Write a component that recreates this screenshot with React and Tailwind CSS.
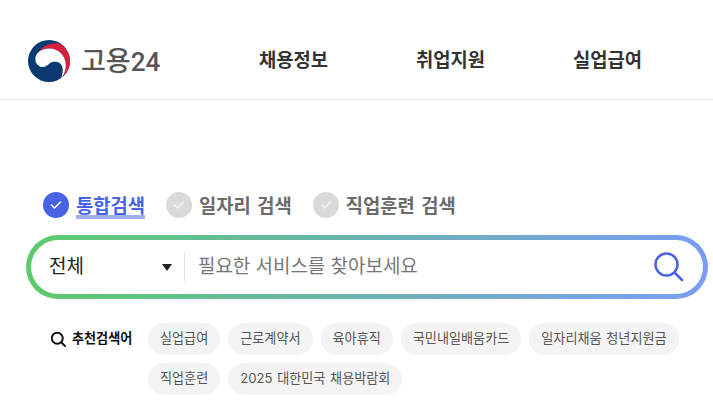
const FONT = "font-['Inter','Noto_Sans_CJK_KR',sans-serif]";

const NAV = ["채용정보", "취업지원", "실업급여"];
const ROW_1 = ["실업급여", "근로계약서", "육아휴직", "국민내일배움카드", "일자리채움 청년지원금"];
const ROW_2 = ["직업훈련", "2025 대한민국 채용박람회"];

const Logo = () => (
  <svg width="42" height="42" viewBox="0 0 40 40" className="shrink-0">
    <defs>
      <clipPath id="logo-clip">
        <circle cx="20" cy="20" r="20" />
      </clipPath>
    </defs>
    <g clipPath="url(#logo-clip)">
      <rect width="40" height="40" fill="#0b3a73" />
      <path d="M11 11C15 4 26 1 33 5C38 9 41 17 40 23C39 31 36 36 31 39C34 34 36 29 36 24C36 15 29 8 20 8C16 8 13 9 11 11Z" fill="#d9203e" />
      <path d="M7 18C7 12 13 8 20 8C29 8 36 15 36 24C36 29 34 34 31 38C33 33 34 28 32 24C30 20 24 20 21 22C18 25 15 27 11 25C8 23 7 21 7 18Z" fill="#fff" />
    </g>
  </svg>
);

const SearchMark = ({ className }) => (
  <svg viewBox="0 0 30 30" fill="none" stroke="currentColor" strokeLinecap="round" className={className}>
    <circle cx="12.500" cy="12.500" r="11" />
    <path d="M20.500 20.500 L28 28" />
  </svg>
);

const Radio = ({ label, active }) => (
  <div className="flex items-center gap-[7px]">
    <span className={`flex h-[26px] w-[26px] items-center justify-center rounded-full ${active ? "bg-[#4763e4]" : "bg-[#dadada]"}`}>
      <svg width="12" height="10" viewBox="0 0 12 10" fill="none" stroke={active ? "#fff" : "#f2f2f2"} strokeWidth="1.600" strokeLinecap="round" strokeLinejoin="round">
        <path d="M1.500 5 L4.500 8 L10.500 2" />
      </svg>
    </span>
    {active ? (
      <span className="h-[28px] bg-[linear-gradient(transparent_86%,#a3b0ee_86%)] text-[18.75px] leading-[32px] font-bold text-[#4763e4]">{label}</span>
    ) : (
      <span className="h-[28px] text-[18.75px] leading-[32px] font-bold [word-spacing:2px] text-[#6b6b6b]">{label}</span>
    )}
  </div>
);

const Chip = ({ children }) => (
  <span className="flex h-8 items-center rounded-full bg-[#f4f4f4] px-3 text-[13.125px] [word-spacing:1px] whitespace-nowrap text-[#555]">{children}</span>
);

export default function App() {
  return (
    <div className={`${FONT} h-[413px] w-[713px] overflow-hidden bg-white`}>
      <header className="flex h-[100px] items-center border-b border-[#e8e8e8] pt-[23px] pl-[28px]">
        <div className="flex w-[231px] items-center gap-[11px]">
          <Logo />
          <span className="text-[27px] leading-none font-medium text-[#555]">
            고용<span className="font-['Roboto'] text-[26px]">24</span>
          </span>
        </div>
        <nav className="flex gap-[88px]">
          {NAV.map((item) => (
            <a key={item} className="text-[18.75px] font-bold text-[#333]">{item}</a>
          ))}
        </nav>
      </header>

      <main className="pt-[91px] pl-[26px]">
        <div className="flex gap-[21px] pl-[17px]">
          <Radio label="통합검색" active />
          <Radio label="일자리 검색" />
          <Radio label="직업훈련 검색" />
        </div>

        <div className="mt-[16px] h-[64px] w-[682px] rounded-full bg-[linear-gradient(90deg,#5ccb6c,#7b9cf7)] p-[5px]">
          <div className="flex h-full items-center rounded-full bg-white pr-[19px] pl-[18px]">
            <div className="flex h-[30px] w-[136px] items-center justify-between border-r border-[#e5e5e5] pr-[12px]">
              <span className="pt-[1px] text-[19px] text-[#222]">전체</span>
              <span className="h-0 w-0 border-x-[5px] border-t-[7px] border-x-transparent border-t-[#222]" />
            </div>
            <span className="flex-1 pt-[1px] pl-[13px] text-[19px] tracking-[-0.05px] text-[#777]">필요한 서비스를 찾아보세요</span>
            <SearchMark className="h-[30px] w-[30px] text-[#4763e4] [stroke-width:2.5]" />
          </div>
        </div>

        <div className="mt-6 flex pl-[25px]">
          <div className="flex h-8 w-[97px] shrink-0 items-center gap-[6px]">
            <SearchMark className="h-[15px] w-[15px] text-[#111] [stroke-width:4]" />
            <span className="text-[13.125px] font-bold whitespace-nowrap text-[#111]">추천검색어</span>
          </div>
          <div className="flex w-[540px] flex-col gap-2">
            <div className="flex gap-2">
              {ROW_1.map((c) => <Chip key={c}>{c}</Chip>)}
            </div>
            <div className="flex gap-2">
              {ROW_2.map((c) => <Chip key={c}>{c}</Chip>)}
            </div>
          </div>
        </div>
      </main>
    </div>
  );
}
